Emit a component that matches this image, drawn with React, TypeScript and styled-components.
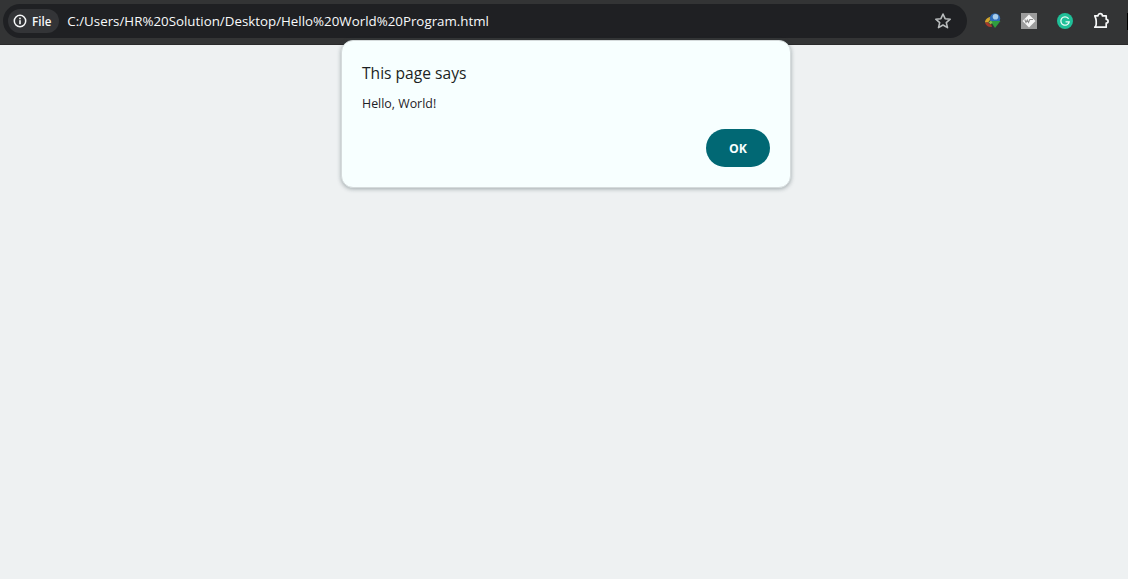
import styled, { createGlobalStyle } from 'styled-components';

const GlobalStyle = createGlobalStyle`
  html, body {
    margin: 0;
    padding: 0;
    height: 100%;
    background: #eef1f2;
    overflow: hidden;
  }
  #root {
    height: 100%;
  }
`;

const Page = styled.div`
  height: 579px;
  display: flex;
  flex-direction: column;
  position: relative;
  font-family: 'Open Sans', 'Noto Sans', sans-serif;
`;

const Toolbar = styled.header`
  height: 45px;
  flex: none;
  background: #333435;
  display: flex;
  align-items: flex-start;
  padding: 4px 0 0 3px;
  box-sizing: border-box;
  border-bottom: 1px solid #2a2a2b;
`;

const Omnibox = styled.div`
  width: 964px;
  height: 34px;
  flex: none;
  border-radius: 17px;
  background: #1f2023;
  display: flex;
  align-items: center;
  padding: 0 15px 0 5px;
  box-sizing: border-box;
`;

const Chip = styled.div`
  height: 24px;
  border-radius: 12px;
  background: #333437;
  display: flex;
  align-items: center;
  gap: 5px;
  padding: 0 8px 0 5px;
  color: #f8f9fa;
  font: 600 11.6px 'Open Sans', sans-serif;
  flex: none;
`;

const Url = styled.span`
  margin-left: 8px;
  flex: 1;
  color: #f8f9fa;
  font-size: 13.33px;
  white-space: nowrap;
`;

const Extensions = styled.div`
  display: flex;
  align-items: center;
  height: 34px;
  gap: 16px;
  margin-left: 16px;
`;

const ExtensionSlot = styled.span`
  width: 20px;
  height: 20px;
  display: flex;
  align-items: center;
  justify-content: center;
`;

const EdgeMark = styled.span`
  position: absolute;
  top: 13px;
  right: 0;
  width: 1px;
  height: 17px;
  background: #000;
`;

const Content = styled.main`
  flex: 1;
  background: #eef1f2;
`;

const Dialog = styled.div`
  position: absolute;
  top: 40px;
  left: 341px;
  width: 450px;
  height: 148px;
  box-sizing: border-box;
  padding: 22px 20px 20px;
  background: #f7ffff;
  border-radius: 12px;
  border: 1px solid #d5dbdc;
  box-shadow: 0 1px 4px rgba(40, 60, 65, 0.4);
  display: flex;
  flex-direction: column;
`;

const Title = styled.h1`
  margin: 0;
  font-size: 15.6px;
  line-height: 20px;
  font-weight: 500;
  color: #1c1f24;
`;

const Message = styled.p`
  margin: 12px 0 0;
  font-size: 12.4px;
  line-height: 18px;
  color: #1f2226;
`;

const Actions = styled.div`
  margin-top: auto;
  display: flex;
  justify-content: flex-end;
`;

const OkButton = styled.button`
  width: 64px;
  height: 38px;
  border: none;
  border-radius: 19px;
  background: #016874;
  color: #f7ffff;
  font: 700 12.3px 'Open Sans', sans-serif;
  padding: 0;
`;

const InfoIcon = () => (
  <svg width="14" height="14" viewBox="0 0 14 14" fill="none">
    <circle cx="7" cy="7" r="5.7" stroke="#f8f9fa" strokeWidth="1.5" />
    <rect x="6.2" y="6.2" width="1.6" height="4" fill="#f8f9fa" />
    <rect x="6.2" y="3.7" width="1.6" height="1.6" fill="#f8f9fa" />
  </svg>
);

const StarIcon = () => (
  <svg width="18" height="18" viewBox="0 0 18 18" fill="none">
    <path
      d="M9 2l2.1 4.7 5.1.5-3.9 3.4 1.2 5L9 13l-4.500 2.600 1.200-5-3.900-3.400 5.100-.5z"
      stroke="#b9bcbd"
      strokeWidth="1.6"
      strokeLinejoin="round"
    />
  </svg>
);

const DownloaderIcon = () => (
  <svg width="18" height="18" viewBox="0 0 18 18">
    <path d="M1 10.500C1 7.500 3.500 5 7 5l1.500 2.500C6 7.500 4.500 9 4.500 10.500z" fill="#d4a52a" />
    <path d="M1 10.500c.7 3 3.500 5 7 4.500l-.7-2.800c-1.600.3-2.800-.5-2.800-1.700z" fill="#a83a2c" />
    <circle cx="11" cy="6.500" r="5.200" fill="#2f6db8" />
    <circle cx="11.500" cy="4.800" r="2.800" fill="#a9cdea" />
    <path d="M6.500 9h10L11 16z" fill="#2f9e3f" />
    <path d="M4.500 10.500l2.500-2 1.500 2.500-2 1.300z" fill="#7fc24a" />
  </svg>
);

const GrayIcon = () => (
  <svg width="16" height="16" viewBox="0 0 16 16" fill="none">
    <rect width="16" height="16" fill="#9c9c9c" />
    <path d="M8 1.500L14.500 8 8 14.500 1.500 8z" fill="#f6f6f6" />
    <path
      d="M3.800 6.500l1.200 3 1.300-2.500 1.200 2.500 1.300-3h3.200"
      stroke="#8c8c8c"
      strokeWidth="1.100"
    />
  </svg>
);

const GrammarlyIcon = () => (
  <svg width="16" height="16" viewBox="0 0 16 16" fill="none">
    <circle cx="8" cy="8" r="8" fill="#1fbf98" />
    <path
      d="M11.300 5.300A4.200 4.200 0 1 0 12.200 8.800H9"
      stroke="#e8fbf6"
      strokeWidth="1.300"
      strokeLinecap="round"
    />
  </svg>
);

const PuzzleIcon = () => (
  <svg width="18" height="18" viewBox="0 0 18 18" fill="none">
    <path
      d="M2.800 3.800h3.200a2.200 2.200 0 0 1 4.400 0h3.800v3.500a1.900 1.900 0 0 1 0 3.800v4.100H2.800c.9-.6 1.400-1.500 1.400-2.900V9c0-2-.7-3.600-1.400-5.200z"
      stroke="#f8f9fa"
      strokeWidth="1.700"
      strokeLinejoin="round"
    />
  </svg>
);

const App = () => {
  return (
    <>
      <GlobalStyle />
      <Page>
        <Toolbar>
          <Omnibox>
            <Chip>
              <InfoIcon />
              File
            </Chip>
            <Url>C:/Users/HR%20Solution/Desktop/Hello%20World%20Program.html</Url>
            <StarIcon />
          </Omnibox>
          <Extensions>
            <ExtensionSlot>
              <DownloaderIcon />
            </ExtensionSlot>
            <ExtensionSlot>
              <GrayIcon />
            </ExtensionSlot>
            <ExtensionSlot>
              <GrammarlyIcon />
            </ExtensionSlot>
            <ExtensionSlot>
              <PuzzleIcon />
            </ExtensionSlot>
          </Extensions>
          <EdgeMark />
        </Toolbar>
        <Content />
        <Dialog>
          <Title>This page says</Title>
          <Message>Hello, World!</Message>
          <Actions>
            <OkButton>OK</OkButton>
          </Actions>
        </Dialog>
      </Page>
    </>
  );
};

export default App;
